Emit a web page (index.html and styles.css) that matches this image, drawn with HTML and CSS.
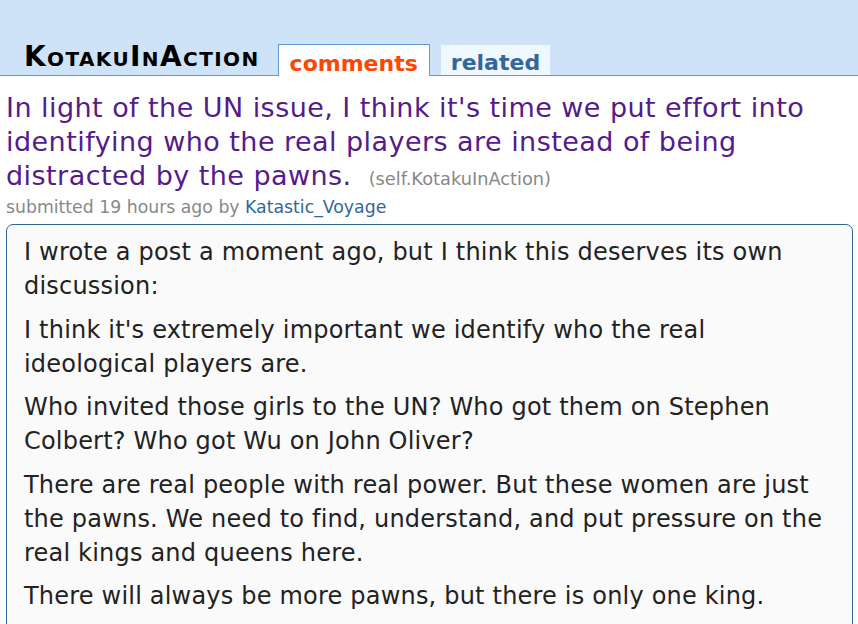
FILE: index.html
```html
<!DOCTYPE html>
<html>
<head>
<meta charset="utf-8">
<link rel="stylesheet" href="styles.css">
</head>
<body>
<div class="header">
  <span class="pagename">KotakuInAction</span>
  <span class="tab selected">comments</span>
  <span class="tab">related</span>
</div>
<div class="content">
  <p class="title"><span class="title-link">In light of the UN issue, I think it's time we put effort into identifying who the real players are instead of being distracted by the pawns.</span> <span class="domain">(self.KotakuInAction)</span></p>
  <p class="tagline">submitted 19 hours ago by <span class="author">Katastic_Voyage</span></p>
  <div class="usertext">
    <p>I wrote a post a moment ago, but I think this deserves its own discussion:</p>
    <p>I think it's extremely important we identify who the real ideological players are.</p>
    <p>Who invited those girls to the UN? Who got them on Stephen Colbert? Who got Wu on John Oliver?</p>
    <p>There are real people with real power. But these women are just the pawns. We need to find, understand, and put pressure on the real kings and queens here.</p>
    <p>There will always be more pawns, but there is only one king.</p>
  </div>
</div>
</body>
</html>
```
FILE: styles.css
```css
html, body {
  margin: 0;
  padding: 0;
  background: #ffffff;
  font-family: "DejaVu Sans", Verdana, sans-serif;
  overflow: hidden;
}
.header {
  background: #cee3f8;
  border-bottom: 1px solid #5f99cf;
  height: 76px;
  display: flex;
  align-items: flex-end;
  padding-left: 24px;
  box-sizing: border-box;
}
.pagename {
  font-size: 28px;
  font-weight: bold;
  font-variant: small-caps;
  letter-spacing: 1.4px;
  color: #000;
  line-height: 1;
  margin-right: 18px;
  margin-bottom: 4px;
}
.tab {
  font-size: 22px;
  font-weight: bold;
  color: #369;
  background: #eff7ff;
  padding: 0 10px;
  height: 30px;
  line-height: 36px;
  margin-right: 11px;
  box-sizing: border-box;
  overflow: hidden;
}
.tab.selected {
  color: #ff4500;
  background: #fff;
  border: 1px solid #5f99cf;
  border-bottom: none;
  height: 32px;
  margin-bottom: -1px;
  padding: 0 11px;
  line-height: 37px;
}
.content {
  padding: 0 5px 0 6px;
}
.title {
  margin: 15px 10px 0 0;
  font-size: 27px;
  letter-spacing: 0.45px;
  line-height: 34px;
  color: #551a8b;
}
.domain {
  font-size: 17.8px;
  letter-spacing: 0;
  color: #888;
  margin-left: 8px;
}
.tagline {
  margin: 0;
  font-size: 17.3px;
  line-height: 22px;
  color: #888;
}
.author {
  color: #369;
}
.usertext {
  margin-top: 6px;
  background: #fafafa;
  border: 1px solid #369;
  border-radius: 7px;
  padding: 10px 17px 10px 17px;
  color: #222;
}
.usertext p {
  margin: 0 0 9.5px 0;
  font-size: 24px;
  letter-spacing: 0.2px;
  line-height: 34px;
}
```
